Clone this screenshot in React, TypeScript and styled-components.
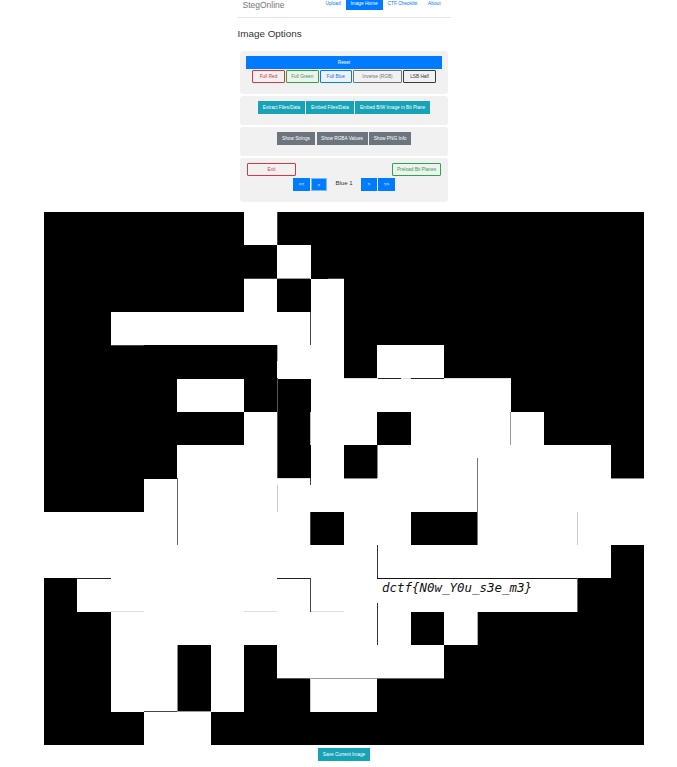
import React from "react";
import styled, { createGlobalStyle } from "styled-components";

const Global = createGlobalStyle`
  html, body { margin: 0; padding: 0; background: #fff; overflow: hidden; }
  body { font-family: "Liberation Sans", Arial, sans-serif; color: #212529; }
  * { box-sizing: border-box; }
`;

const Page = styled.div`
  width: 677px;
  height: 767px;
  padding-left: 11px;
  display: flex;
  flex-direction: column;
  align-items: center;
`;

const Header = styled.div`
  width: 213px;
  height: 18px;
  display: flex;
  align-items: flex-start;
  justify-content: space-between;
  padding: 0 10px 0 5px;
  border-bottom: 1px solid #e3e3e3;
`;

const Brand = styled.span`
  font-size: 8.5px;
  line-height: 10px;
  color: #777;
`;

const NavList = styled.nav`
  display: flex;
  align-items: flex-start;
`;

const NavLink = styled.a<{ $active?: boolean; $w: number; $align?: string }>`
  width: ${(p) => p.$w}px;
  height: 10px;
  font-size: 4.75px;
  line-height: 8px;
  text-align: ${(p) => p.$align ?? "center"};
  color: ${(p) => (p.$active ? "#fff" : "#007bff")};
  background: ${(p) => (p.$active ? "#007bff" : "transparent")};
`;

const Heading = styled.h4`
  width: 213px;
  margin: 10px 0 11px;
  font-size: 9.9px;
  line-height: 12px;
  font-weight: 400;
  color: #333;
`;

const Panel = styled.section<{ $h: number }>`
  width: 208px;
  height: ${(p) => p.$h}px;
  margin-bottom: 2px;
  padding: 5px 6px;
  background: #f1f1f1;
  border-radius: 3px;
  display: flex;
  flex-direction: column;
  align-items: center;
`;

const Row = styled.div<{ $gap?: number; $top?: number }>`
  display: flex;
  justify-content: center;
  gap: ${(p) => p.$gap ?? 1}px;
  margin-top: ${(p) => p.$top ?? 0}px;
`;

const SplitRow = styled.div`
  width: 194px;
  display: flex;
  justify-content: space-between;
`;

const Solid = styled.button<{ $bg: string; $w: number | string; $focus?: boolean }>`
  width: ${(p) => (typeof p.$w === "number" ? `${p.$w}px` : p.$w)};
  height: 13px;
  padding: 0;
  border: ${(p) => (p.$focus ? "1px solid #7db9fb" : "none")};
  background: ${(p) => p.$bg};
  color: #fff;
  font-family: inherit;
  font-size: 4.75px;
  line-height: 13px;
  text-align: center;
`;

const Outline = styled.button<{ $c: string; $w: number }>`
  width: ${(p) => p.$w}px;
  height: 13px;
  padding: 0;
  border: 1px solid ${(p) => p.$c};
  border-radius: 1px;
  background: transparent;
  color: ${(p) => p.$c};
  font-family: inherit;
  font-size: 4.75px;
  line-height: 11px;
  text-align: center;
`;

const PageLabel = styled.span`
  width: 32px;
  height: 10px;
  font-size: 6px;
  line-height: 10px;
  text-align: center;
  color: #333;
`;

const Picture = styled.svg`
  display: block;
  width: 600px;
  height: 533px;
  margin-top: 8px;
  flex: none;
  background: #fff;
`;

const Flag = styled.text`
  font-family: "DejaVu Sans Mono", monospace;
  font-style: oblique;
  font-size: 12.46px;
  fill: #111;
`;

const SaveRow = styled.div`
  display: flex;
  margin-top: 3px;
`;

const CELL = 100 / 3;
const ROW_H = 533 / 16;

// 1 = black module, 0 = white module
const GRID = [
  "111111011111111111",
  "111111101111111111",
  "111111010111111111",
  "110000000111111111",
  "111111100100111111",
  "111100110000001111",
  "111111010010000111",
  "111100010100000001",
  "111000000000000000",
  "000000001001100000",
  "000000000000000001",
  "100000000000000011",
  "110000000001011111",
  "110010100000111111",
  "110010110011111111",
  "111001111111111111",
];

// Faint seams between the tiles of the picture: [x1, y1, x2, y2, colour]
const SEAMS: [number, number, number, number, string][] = [
  [244, 278.5, 277, 278.5, "#444"],
  [277, 278.5, 310, 278.5, "#999"],
  [328, 278.5, 344, 278.5, "#444"],
  [277.5, 212, 277.5, 245, "#444"],
  [310.5, 312, 310.5, 345, "#444"],
  [111, 345.5, 144, 345.5, "#444"],
  [277.5, 345, 277.5, 361, "#aaa"],
  [344, 378.5, 378, 378.5, "#ddd"],
  [378, 378.5, 401, 378.5, "#222"],
  [401, 378.5, 411, 378.5, "#ddd"],
  [411, 378.5, 444, 378.5, "#222"],
  [444, 378.5, 511, 378.5, "#ddd"],
  [277.5, 378, 277.5, 478, "#555"],
  [310.5, 412, 310.5, 445, "#bbb"],
  [510.5, 412, 510.5, 445, "#999"],
  [477.5, 458, 477.5, 545, "#777"],
  [177.5, 478, 177.5, 545, "#666"],
  [277, 478.5, 310, 478.5, "#ddd"],
  [344, 478.5, 377, 478.5, "#888"],
  [611, 478.5, 644, 478.5, "#888"],
  [377.5, 445, 377.5, 478, "#888"],
  [310.5, 478, 310.5, 485, "#444"],
  [277.5, 485, 277.5, 512, "#ccc"],
  [310.5, 512, 310.5, 545, "#444"],
  [577.5, 512, 577.5, 545, "#ccc"],
  [377.5, 545, 377.5, 578, "#333"],
  [77, 578.5, 111, 578.5, "#222"],
  [277, 578.5, 310, 578.5, "#222"],
  [310.5, 578, 310.5, 612, "#444"],
  [377, 578.5, 577, 578.5, "#111"],
  [577.5, 578, 577.5, 612, "#666"],
  [111, 611.5, 144, 611.5, "#ddd"],
  [244, 611.5, 277, 611.5, "#ddd"],
  [311, 611.5, 344, 611.5, "#ddd"],
  [377.5, 603, 377.5, 645, "#333"],
  [477.5, 612, 477.5, 645, "#aaa"],
  [177.5, 645, 177.5, 712, "#888"],
  [277, 678.5, 310, 678.5, "#555"],
  [310, 678.5, 377, 678.5, "#999"],
  [377, 678.5, 444, 678.5, "#666"],
  [310.5, 678, 310.5, 712, "#ccc"],
  [144, 711.5, 177, 711.5, "#444"],
  [177, 711.5, 211, 711.5, "#999"],
];

const PRIMARY = "#007bff";
const INFO = "#17a2b8";
const SECONDARY = "#6c757d";

export default function App() {
  return (
    <Page>
      <Global />
      <Header>
        <Brand>StegOnline</Brand>
        <NavList>
          <NavLink $w={20} $align="left">Upload</NavLink>
          <NavLink $w={37} $active>Image Home</NavLink>
          <NavLink $w={40}>CTF Checklist</NavLink>
          <NavLink $w={18} $align="right">About</NavLink>
        </NavList>
      </Header>
      <Heading>Image Options</Heading>
      <Panel $h={43}>
        <Solid $bg={PRIMARY} $w="100%">Reset</Solid>
        <Row $top={1}>
          <Outline $c="#dc3545" $w={33}>Full Red</Outline>
          <Outline $c="#28a745" $w={32.5}>Full Green</Outline>
          <Outline $c="#007bff" $w={32.5}>Full Blue</Outline>
          <Outline $c="#6c757d" $w={49}>Inverse (RGB)</Outline>
          <Outline $c="#343a40" $w={33}>LSB Half</Outline>
        </Row>
      </Panel>
      <Panel $h={29}>
        <Row>
          <Solid $bg={INFO} $w={47}>Extract Files/Data</Solid>
          <Solid $bg={INFO} $w={48}>Embed Files/Data</Solid>
          <Solid $bg={INFO} $w={75}>Embed B/W Image in Bit Plane</Solid>
        </Row>
      </Panel>
      <Panel $h={29}>
        <Row $gap={1.5}>
          <Solid $bg={SECONDARY} $w={38}>Show Strings</Solid>
          <Solid $bg={SECONDARY} $w={51}>Show RGBA Values</Solid>
          <Solid $bg={SECONDARY} $w={42}>Show PNG Info</Solid>
        </Row>
      </Panel>
      <Panel $h={44}>
        <SplitRow>
          <Outline $c="#dc3545" $w={49}>Exit</Outline>
          <Outline $c="#28a745" $w={49}>Preload Bit Planes</Outline>
        </SplitRow>
        <Row $top={2}>
          <Solid $bg={PRIMARY} $w={17}>&lt;&lt;</Solid>
          <Solid $bg={PRIMARY} $w={16} $focus>&lt;</Solid>
          <PageLabel>Blue 1</PageLabel>
          <Solid $bg={PRIMARY} $w={16}>&gt;</Solid>
          <Solid $bg={PRIMARY} $w={17}>&gt;&gt;</Solid>
        </Row>
      </Panel>
      <Picture viewBox="44 212 600 533" shapeRendering="crispEdges">
        {GRID.flatMap((row, r) =>
          row.split("").map((cell, c) =>
            cell === "1" ? (
              <rect
                key={`${r}-${c}`}
                x={44 + c * CELL}
                y={212 + r * ROW_H}
                width={CELL}
                height={ROW_H}
                fill="#000"
              />
            ) : null
          )
        )}
        {SEAMS.map(([x1, y1, x2, y2, color], i) => (
          <line key={i} x1={x1} y1={y1} x2={x2} y2={y2} stroke={color} strokeWidth={1} />
        ))}
        <Flag x={382} y={592}>dctf{"{"}N0w_Y0u_s3e_m3{"}"}</Flag>
      </Picture>
      <SaveRow>
        <Solid $bg={INFO} $w={52}>Save Current Image</Solid>
      </SaveRow>
    </Page>
  );
}
